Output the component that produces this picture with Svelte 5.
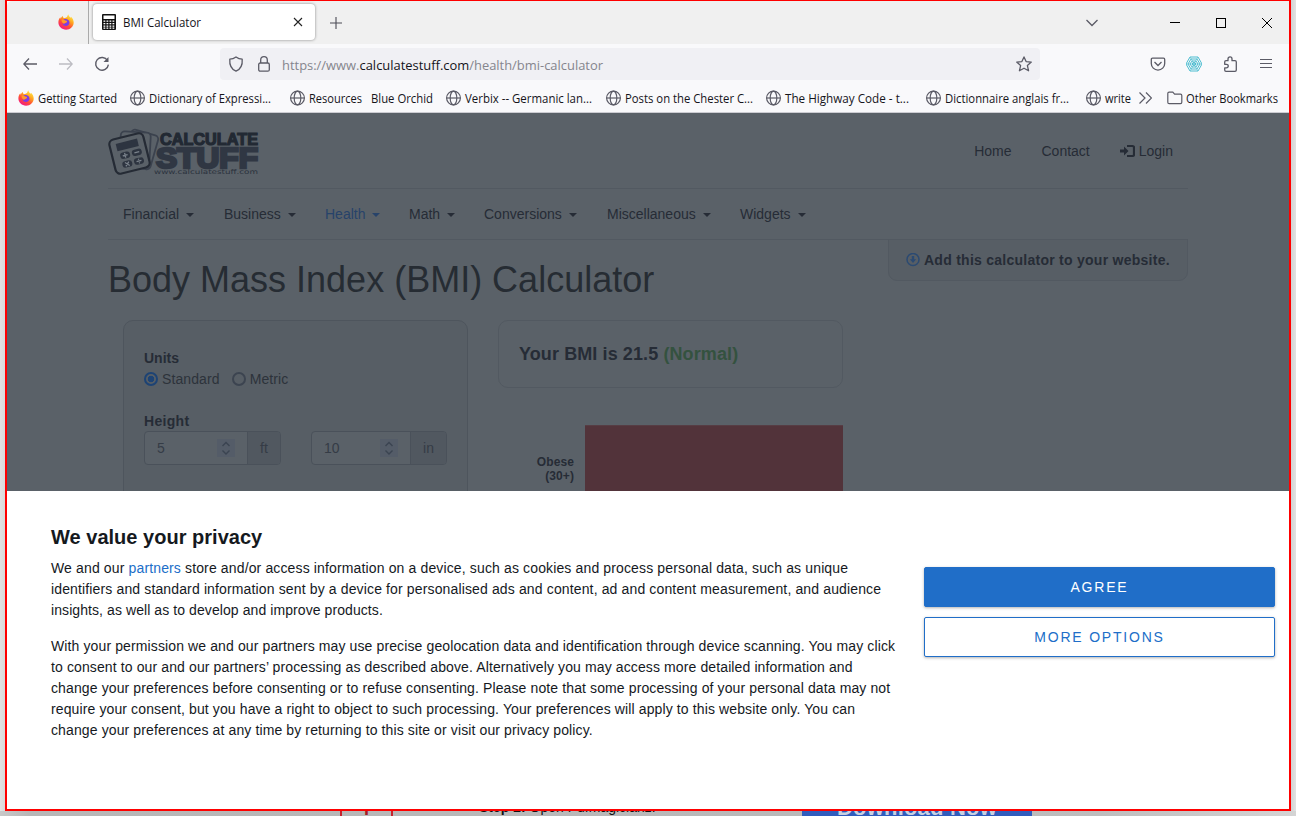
<script>
  const bookmarks = [
    { icon: 'fox', label: 'Getting Started', w: 79, cell: 112, gap: 4 },
    { icon: 'globe', label: 'Dictionary of Expressi...', w: 122, cell: 160, gap: 3 },
    { icon: 'globe', label: 'Resources', w: 53, cell: 81, gap: 3 },
    { icon: '', label: 'Blue Orchid', w: 62, cell: 75, gap: 0 },
    { icon: 'globe', label: 'Verbix -- Germanic lan...', w: 127, cell: 160, gap: 3 },
    { icon: 'globe', label: 'Posts on the Chester C...', w: 128, cell: 160, gap: 3 },
    { icon: 'globe', label: 'The Highway Code - t...', w: 124, cell: 160, gap: 3 },
    { icon: 'globe', label: 'Dictionnaire anglais fr...', w: 124, cell: 160, gap: 3 },
    { icon: 'globe', label: 'write', w: 26, cell: 52, gap: 3 },
    { icon: 'more', label: '', w: 0, cell: 29, gap: 0 },
    { icon: 'folder', label: 'Other Bookmarks', w: 92, cell: 120, gap: 3 }
  ];
  const menu = [
    { label: 'Financial', w: 101 },
    { label: 'Business', w: 101 },
    { label: 'Health', w: 84, active: true },
    { label: 'Math', w: 75 },
    { label: 'Conversions', w: 123 },
    { label: 'Miscellaneous', w: 133 },
    { label: 'Widgets', w: 80 }
  ];
  const heights = [
    { value: '5', unit: 'ft', field: 102, total: 137 },
    { value: '10', unit: 'in', field: 98, total: 136 }
  ];
</script>

{#snippet label(text, w, size = 12)}
  <svg class="label" width={w} height="18" font-size={size}>
    <text x="0" y="13.5" textLength={w} lengthAdjust="spacingAndGlyphs">{text}</text>
  </svg>
{/snippet}

{#snippet fox()}
  <svg width="16" height="16" viewBox="0 0 16 16">
    <defs>
      <linearGradient id="fx" x1="0.85" y1="0.05" x2="0.25" y2="1">
        <stop offset="0" stop-color="#fff04a" />
        <stop offset="0.35" stop-color="#ffa51f" />
        <stop offset="0.65" stop-color="#ff4b38" />
        <stop offset="1" stop-color="#f0148c" />
      </linearGradient>
    </defs>
    <path fill="url(#fx)" d="M10.2.3c.3 1.6 1.3 2.4 2.5 3.4.3-.2.4-.6.3-1 1.600 1.300 2.700 3.600 2.700 5.800 0 4-3.400 7.200-7.600 7.200S.4 12.600.4 8.600c0-2.200.7-3.900 2-5.300 0 .6.1 1 .3 1.400C3.200 3.500 3.900 2.600 4.800 2c0 1 .4 1.700 1.100 2.200C7.200 4 8.300 3.600 9 3 9.400 2.300 9.600 1.400 10.200.3z" />
    <path fill="#7a3be8" d="M5.200 6.200c.9-1.200 2.200-1.500 3.500-1 1.900.5 2.900 1.900 2.800 3.600-.1 1.900-1.600 3.200-3.500 3.200-1.800 0-3.300-1.200-3.500-2.800 1 .7 2 .6 2.700 0L9 8.300c-.9-.5-2.300-.4-3.800-2.100z" />
    <path fill="#ff9a2b" d="M3.600 5.500c1.500 0 2.800.3 3.600 1.100 1 .1 1.800.4 1.900 1-.2.600-1.100.8-1.600 1.100-.6.700-1.300 1-2.500.6C4 8.500 3.500 7 3.600 5.500z" />
  </svg>
{/snippet}

{#snippet globe()}
  <svg width="16" height="16" viewBox="0 0 16 16" fill="none" stroke="#5b5b66" stroke-width="1.2">
    <circle cx="7.500" cy="8" r="6.900" />
    <ellipse cx="7.500" cy="8" rx="3.300" ry="6.900" />
    <path d="M.6 8h13.800" />
  </svg>
{/snippet}

<div class="desktop">
  <div class="window">
    <div class="tabs">
      <div class="pinned">{@render fox()}</div>
      <div class="tab">
        <svg width="14" height="16" viewBox="0 0 14 16">
          <rect width="14" height="16" rx="1" fill="#111" />
          <rect x="1.500" y="1.500" width="11" height="3.500" fill="#fff" />
          <g fill="#fff">
            {#each [6.5, 9, 11.5, 13.5] as y}
              {#each [1.5, 4.500, 7.500, 10.500] as x}
                <rect {x} {y} width="1.800" height="1.300" />
              {/each}
            {/each}
          </g>
        </svg>
        {@render label('BMI Calculator', 78)}
        <svg class="close" width="10" height="10" stroke="#222" stroke-width="1.1"><path d="M1 1l8 8M9 1l-8 8" /></svg>
      </div>
      <svg class="plus" width="12" height="12" stroke="#4a4a55" stroke-width="1.100"><path d="M6 0v12M0 6h12" /></svg>
      <div class="controls">
        <svg width="14" height="8" fill="none" stroke="#5b5b66" stroke-width="1.300"><path d="M1.500 1l5.500 5.500L12.500 1" /></svg>
        <svg width="10" height="10" stroke="#000"><path d="M0 4.500h10" /></svg>
        <svg width="10" height="10" fill="none" stroke="#000"><rect x=".5" y=".5" width="9" height="9" /></svg>
        <svg width="10" height="10" stroke="#000"><path d="M0 0l10 10M10 0L0 10" /></svg>
      </div>
    </div>

    <div class="toolbar">
      <div class="history">
        <svg width="14" height="12" fill="none" stroke="#5b5b66" stroke-width="1.300"><path d="M6 .5L.8 6 6 11.500M.8 6H14" /></svg>
        <svg width="14" height="12" fill="none" stroke="#bcbcc2" stroke-width="1.300"><path d="M8 .5L13.200 6 8 11.500M13.200 6H0" /></svg>
        <svg width="16" height="16" fill="none" stroke="#5b5b66" stroke-width="1.400"><path d="M13.500 4.500A6.400 6.400 0 1 0 14.400 8.700" /><path d="M14.500 1v5h-5z" fill="#5b5b66" stroke="none" /></svg>
      </div>
      <div class="urlbar">
        <svg width="16" height="16" fill="none" stroke="#5b5b66" stroke-width="1.300"><path d="M8 .9c2 1.500 4.300 2.200 6.200 2.300.5 6-1.700 10-6.200 12C3.500 13.200 1.300 9.200 1.800 3.200 3.700 3.100 6 2.400 8 .9z" stroke-linejoin="round" /></svg>
        <svg class="lock" width="12" height="16" fill="none" stroke="#5b5b66" stroke-width="1.300"><rect x=".7" y="7" width="10.600" height="8.200" rx="1.500" /><path d="M2.700 7V4a3.300 3.300 0 0 1 6.600 0v3" /></svg>
        <svg class="label url" width="322" height="20" font-size="13.500">
          <text x="0" y="15.500" textLength="321" lengthAdjust="spacingAndGlyphs" fill="#85858d">https://www.<tspan fill="#15141a">calculatestuff.com</tspan>/health/bmi-calculator</text>
        </svg>
        <svg class="star" width="16" height="16" fill="none" stroke="#5b5b66" stroke-width="1.300" stroke-linejoin="round"><path d="M8 .9l2.100 4.700 5.200.5-3.900 3.500 1.200 5.200L8 12.200l-4.600 2.600 1.200-5.200L.7 6.100l5.200-.5z" /></svg>
      </div>
      <div class="tools">
        <svg width="16" height="16" fill="none" stroke="#5b5b66" stroke-width="1.300"><path d="M2.500 2.200h11c.7 0 1.200.5 1.200 1.200v4a6.700 6.700 0 0 1-13.400 0v-4c0-.7.500-1.200 1.200-1.200z" /><path d="M4.500 6L8 9.500 11.500 6" /></svg>
        <svg width="16" height="16" fill="none" stroke="#4dbdd0" stroke-width="1"><path d="M4 1h8l4 7-4 7H4L0 8zM5 3h6l3 5-3 5H5L2 8zM6 5h4l2 3-2 3H6L4 8zM7 6.700h2L9.800 8 9 9.300H7L6.200 8z" /><path d="M4 1l8 14M12 1L4 15M0 8h16" stroke-width=".6" /></svg>
        <svg width="16" height="16" fill="none" stroke="#5b5b66" stroke-width="1.300" stroke-linejoin="round"><path d="M6 4.700V2.900a2 2 0 0 1 4 0v1.800h3c.8 0 1.300.5 1.300 1.300v8c0 .8-.5 1.300-1.300 1.300H4c-.8 0-1.300-.5-1.300-1.300v-2.200h1.800a1.700 1.700 0 0 0 0-3.500H2.700V6c0-.8.500-1.300 1.300-1.300z" /></svg>
        <svg width="12" height="12" stroke="#5b5b66" stroke-width="1.200"><path d="M0 1.500h12M0 5.500h12M0 9.500h12" /></svg>
      </div>
    </div>

    <div class="bookmarks">
      {#each bookmarks as b}
        <div class="bm" style="width:{b.cell}px;gap:{b.gap}px">
          {#if b.icon === 'fox'}{@render fox()}
          {:else if b.icon === 'globe'}{@render globe()}
          {:else if b.icon === 'more'}
            <svg width="14" height="12" fill="none" stroke="#5b5b66" stroke-width="1.200"><path d="M1.500 .5L7 6l-5.500 5.500M8 .5L13.500 6 8 11.500" /></svg>
          {:else if b.icon === 'folder'}
            <svg width="16" height="16" fill="none" stroke="#5b5b66" stroke-width="1.200"><path d="M.8 3.500c0-.8.500-1.300 1.300-1.300h3.700l1.800 1.900h5.900c.8 0 1.300.5 1.300 1.300v6.900c0 .8-.5 1.300-1.300 1.300H2.100c-.8 0-1.300-.5-1.300-1.300z" /></svg>
          {/if}
          {#if b.label}{@render label(b.label, b.w)}{/if}
        </div>
      {/each}
    </div>

    <div class="page">
      <div class="container">
        <header>
          <svg class="logo" width="152" height="49" viewBox="0 0 152 49">
            <g fill="#5a6168" stroke="#3b424e" stroke-width="1.800">
              <rect x="19" y="5" width="28" height="35" rx="4" transform="rotate(16 33 22)" />
              <rect x="12" y="5" width="30" height="36" rx="4" transform="rotate(3 27 23)" />
              <rect x="4" y="9" width="35" height="35" rx="5" transform="rotate(-14 21.500 26.500)" stroke="#252b35" stroke-width="2.200" />
            </g>
            <g transform="rotate(-14 21 27)" fill="#2d3440">
              <rect x="10.500" y="14" width="22" height="7.500" />
              <rect x="12" y="24" width="10" height="6.500" rx="3" />
              <rect x="24" y="24" width="10" height="6.500" rx="3" />
              <rect x="12" y="33" width="10" height="6.500" rx="3" />
              <rect x="24" y="33" width="10" height="6.500" rx="3" />
              <path d="M14.500 27.200h5M17 24.800v5M26.500 27.200h5M15 34.300l4 4M19 34.300l-4 4M26.500 36.200h5M29 33.900v1M29 37.600v1" stroke="#7a828b" stroke-width="1.300" />
            </g>
            <g font-family="Liberation Sans" font-weight="700">
              <text x="52" y="17.700" font-size="16.500" textLength="98" lengthAdjust="spacingAndGlyphs" fill="#222933" stroke="#222933" stroke-width="1.200">CALCULATE</text>
              <text x="48" y="41" font-size="29" textLength="102" lengthAdjust="spacingAndGlyphs" fill="#303743" stroke="#303743" stroke-width="2.600">STUFF</text>
            </g>
            <text x="46" y="47" font-family="DejaVu Sans" font-size="6.500" textLength="104" lengthAdjust="spacingAndGlyphs" fill="#2b323d">www.calculatestuff.com</text>
          </svg>
          <nav class="account">
            <span>Home</span><span>Contact</span>
            <span class="login">
              <svg width="15" height="14" fill="none" stroke="#262c36" stroke-width="2.200"><path d="M7 2h5.500q1.500 0 1.500 1.500v7q0 1.500-1.500 1.500H7" /><path d="M0 5.500h4V2.500L8.500 7 4 11.500v-3H0z" fill="#262c36" stroke="none" /></svg>Login
            </span>
          </nav>
        </header>
        <nav class="menu">
          {#each menu as m}
            <span class:active={m.active} style="width:{m.w}px">{m.label}<i></i></span>
          {/each}
        </nav>
        <div class="headline">
          <h1>Body Mass Index (BMI) Calculator</h1>
          <div class="embed">
            <svg width="14" height="14" fill="none" stroke="#2b4a72" stroke-width="1.500"><circle cx="7" cy="6.500" r="6" /><path d="M5.800 3h2.400v3.200h2L7 10 3.800 6.200h2z" fill="#2b4a72" stroke="none" /></svg>
            <b>Add this calculator to your website.</b>
          </div>
        </div>
        <div class="columns">
          <section class="form">
            <b>Units</b>
            <div class="radios">
              <span class="radio on"></span><span class="standard">Standard</span>
              <span class="radio"></span><span>Metric</span>
            </div>
            <b class="wide">Height</b>
            <div class="fields">
              {#each heights as h}
                <div class="group" style="width:{h.total}px">
                  <div class="input" style="width:{h.field}px">
                    <span>{h.value}</span>
                    <svg width="18" height="18" fill="none" stroke="#3b4451" stroke-width="1.400"><rect width="18" height="18" fill="#545c68" stroke="none" /><path d="M5.500 7L9 3.500 12.500 7M5.500 11.500L9 15l3.500-3.500" /></svg>
                  </div>
                  <div class="unit">{h.unit}</div>
                </div>
              {/each}
            </div>
          </section>
          <section class="result">
            <div class="score">Your BMI is 21.5 <span>(Normal)</span></div>
            <div class="chart">
              <div class="range">Obese<br />(30+)</div>
              <div class="bar"></div>
            </div>
          </section>
        </div>
      </div>
    </div>

    <div class="consent">
      <div class="copy">
        <h2>We value your privacy</h2>
        <p class="intro">We and our <a href="#partners">partners</a> store and/or access information on a device, such as cookies and process personal data, such as unique<br />identifiers and standard information sent by a device for personalised ads and content, ad and content measurement, and audience<br /><span class="last">insights, as well as to develop and improve products.</span></p>
        <p>With your permission we and our partners may use precise geolocation data and identification through device scanning. You may click<br />to consent to our and our partners’ processing as described above. Alternatively you may access more detailed information and<br />change your preferences before consenting or to refuse consenting. Please note that some processing of your personal data may not<br />require your consent, but you have a right to object to such processing. Your preferences will apply to this website only. You can<br />change your preferences at any time by returning to this site or visit our privacy policy.</p>
      </div>
      <div class="actions">
        <button class="primary">AGREE</button>
        <button>MORE OPTIONS</button>
      </div>
    </div>
  </div>

  <div class="behind">
    <div class="glyph"><span>Y</span></div>
    <div class="step"><b>Step 2:</b> Open Pdfmagicianz.</div>
    <div class="download"><span>Download Now</span></div>
  </div>
</div>

<style>
  :global(body) { overflow: hidden; }
  .desktop {
    width: 1296px; height: 816px; overflow: hidden; display: flex; flex-direction: column;
    background: linear-gradient(90deg, #e2e2e2, #d9d9d9 5px, #d0d0d0 1290px, #e2e2e2);
    font-family: 'Liberation Sans', Arial, sans-serif; font-size: 14px;
  }
  .desktop :global(svg) { display: block; flex: none; }
  .window {
    box-sizing: border-box; width: 1286px; height: 811px; margin-left: 5px; flex: none;
    border: 2px solid #f00; border-top-width: 1px; background: #fff; display: flex; flex-direction: column;
  }
  .label { font-family: 'Open Sans', 'Noto Sans', sans-serif; fill: #15141a; overflow: visible; }
  .tabs { height: 43px; background: #f0f0f0; display: flex; align-items: center; flex: none; border-top-left-radius: 5px; }
  .pinned { box-sizing: border-box; width: 82px; height: 43px; padding: 13px 0 0 51px; border-right: 1px solid #aaa; }
  .tab {
    box-sizing: border-box; width: 222px; height: 36px; margin: 0 0 1px 4px; padding: 0 12px 0 9px; background: #fff;
    border-radius: 4px; box-shadow: 0 0 3px rgba(0, 0, 0, 0.45); display: flex; align-items: center; gap: 7px;
  }
  .close { margin-left: auto; }
  .plus { margin-left: 15px; }
  .controls { margin-left: auto; margin-right: 17px; display: flex; align-items: center; gap: 36px; }
  .controls svg:first-child { margin-right: 35px; }
  .toolbar { height: 40px; flex: none; background: #f9f9fb; display: flex; align-items: center; }
  .history { width: 197px; padding-left: 16px; display: flex; align-items: center; gap: 22px; }
  .history svg:last-child { margin-left: -1px; }
  .urlbar {
    box-sizing: border-box; width: 820px; height: 32px; padding: 0 8px; border-radius: 4px; background: #f0f0f4;
    display: flex; align-items: center;
  }
  .lock { margin-left: 14px; }
  .url { margin-left: 12px; }
  .star { margin-left: auto; }
  .tools { margin-left: auto; margin-right: 17px; display: flex; align-items: center; gap: 20px; }
  .tools svg:last-child { margin-left: 2px; }
  .bookmarks {
    box-sizing: border-box; height: 29px; flex: none; padding-left: 11px; background: #f9f9fb; border-bottom: 1px solid #ccccd2;
    display: flex; overflow: hidden;
  }
  .bm { display: flex; align-items: center; flex: none; }
  .page { height: 378px; flex: none; overflow: hidden; background: #5a6168; color: #262c36; }
  .container { width: 1080px; margin-left: 101px; }
  header { box-sizing: border-box; height: 76px; border-bottom: 1px solid #525961; display: flex; justify-content: space-between; }
  .logo { margin-top: 14px; }
  .account { display: flex; gap: 30px; padding: 0 15px; height: 76px; align-items: center; }
  .login { display: flex; gap: 4px; align-items: center; }
  .menu { box-sizing: border-box; height: 51px; padding-left: 15px; border-bottom: 1px solid #525961; display: flex; align-items: center; }
  .active { color: #27436a; }
  .menu i { display: inline-block; margin-left: 7px; vertical-align: 2px; border: 4px solid transparent; border-top-color: currentColor; border-bottom: 0; }
  .headline { height: 80px; display: flex; justify-content: space-between; }
  h1 { margin: 19px 0 0; font-size: 36px; font-weight: 400; line-height: 42px; white-space: nowrap; color: #262c33; }
  .embed {
    box-sizing: border-box; width: 300px; height: 42px; margin-top: -1px; padding: 0 17px; border: 1px solid #525961;
    border-radius: 0 0 9px 9px; background: #575e65; display: flex; align-items: center; gap: 4px; white-space: nowrap; letter-spacing: 0.26px;
  }
  .columns { display: flex; padding-left: 15px; gap: 30px; }
  section { width: 345px; flex: none; }
  .form {
    box-sizing: border-box; height: 260px; padding: 27px 20px; border: 1px solid #4e555d; border-radius: 10px;
    background: #575e65; display: flex; flex-direction: column; line-height: 21px;
  }
  .wide { letter-spacing: 0.3px; }
  .radios { display: flex; align-items: center; height: 20px; margin-bottom: 22px; color: #2d333b; letter-spacing: 0.1px; }
  .radio { box-sizing: border-box; width: 14px; height: 14px; margin-right: 4px; border: 2px solid #3c4450; border-radius: 50%; }
  .radio.on { border-color: #1d4374; background: radial-gradient(circle, #1d4374 3px, transparent 3.600px); }
  .standard { margin-right: 12px; }
  .fields { display: flex; gap: 30px; margin-top: -1px; }
  .group { box-sizing: border-box; height: 34px; border: 1px solid #4a515a; border-radius: 4px; display: flex; overflow: hidden; color: #353c46; background: #5a6168; }
  .input { display: flex; align-items: center; justify-content: space-between; box-sizing: border-box; padding: 0 12px; flex: none; }
  .unit { flex: 1; border-left: 1px solid #4a515a; background: #515860; display: flex; align-items: center; justify-content: center; }
  .score {
    box-sizing: border-box; height: 68px; padding-left: 20px; border: 1px solid #525961; border-radius: 10px;
    font-size: 18px; font-weight: 700; line-height: 66px; white-space: pre; letter-spacing: 0.1px;
  }
  .score span { color: #34523f; }
  .chart { display: flex; margin-top: 37px; }
  .range { width: 76px; margin-right: 11px; padding-top: 30px; text-align: right; font-size: 12px; line-height: 14px; font-weight: 700; letter-spacing: 0.1px; }
  .bar { width: 258px; height: 100px; background: #52333a; border-top: 1px solid #563d44; }
  .consent { height: 318px; flex: none; display: flex; background: #fff; color: #15191e; }
  .copy { width: 917px; box-sizing: border-box; padding: 33px 0 0 44px; white-space: nowrap; }
  h2 { margin: 0 0 8px; font-size: 20px; line-height: 26px; letter-spacing: 0.02px; }
  p { margin: 0 0 15px; line-height: 21px; letter-spacing: 0.117px; }
  .intro { letter-spacing: 0.138px; }
  .last { letter-spacing: 0.08px; }
  a { color: #206ec8; text-decoration: none; }
  .actions { width: 351px; padding-top: 76px; display: flex; flex-direction: column; gap: 10px; }
  button {
    box-sizing: border-box; height: 40px; padding: 0; border: 1px solid #206ec8; border-radius: 2px; background: #fff; color: #206ec8;
    font: 14px 'Liberation Sans', Arial, sans-serif; letter-spacing: 1.8px; box-shadow: 0 1px 3px rgba(0, 0, 0, 0.3);
  }
  .primary { background: #206ec8; color: #fff; }
  .behind {
    height: 5px; flex: none; overflow: hidden; padding-left: 340px; display: flex;
    background: linear-gradient(90deg, #c8c8c8, #b7b7b7 30px, #b9b9b9 800px, #bdbdbd 1100px, #d4d4d4);
  }
  .glyph { box-sizing: border-box; width: 53px; height: 5px; border: solid #c8222d; border-width: 0 2px; color: #a31c26; font-weight: 700; font-size: 18px; line-height: 16px; text-align: center; }
  .glyph span { display: block; margin-top: -10px; }
  .step { width: 323px; margin: -12px 0 0 86px; font-size: 14px; line-height: 17px; color: #111; white-space: nowrap; letter-spacing: 0; }
  .download { width: 230px; height: 5px; background: #315dbd; color: #c8d1e2; font-size: 22px; font-weight: 700; line-height: 24px; text-align: center; white-space: nowrap; }
  .download span { display: block; margin-top: -15px; letter-spacing: 0.2px; }
</style>
